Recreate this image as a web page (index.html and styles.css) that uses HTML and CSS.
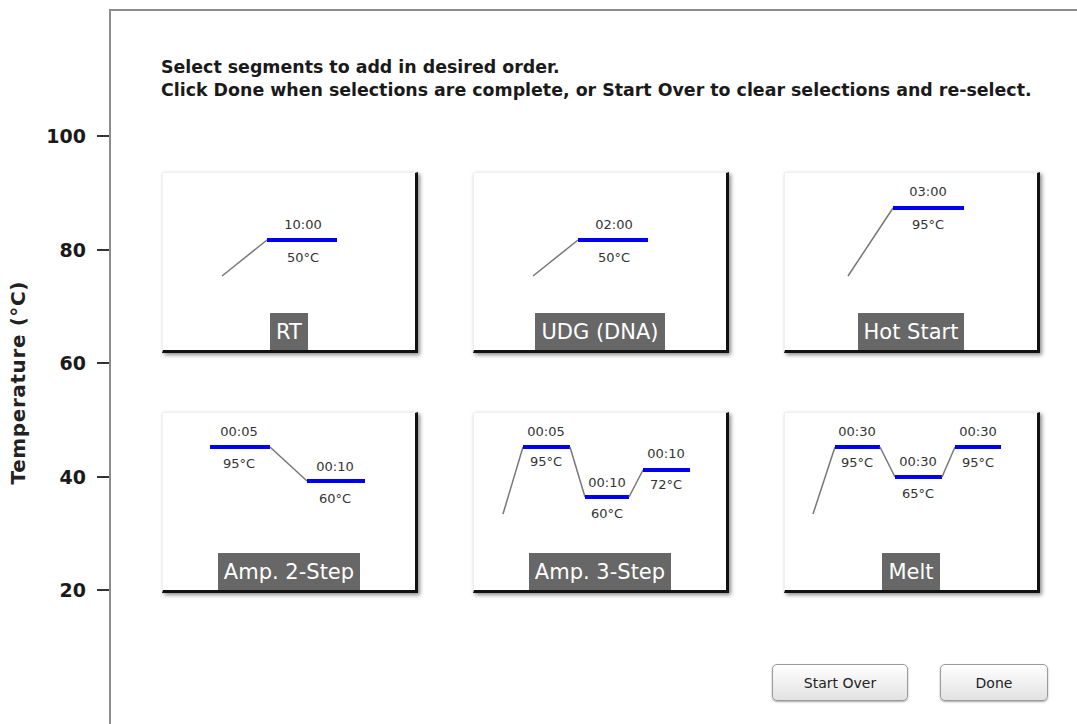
FILE: index.html
```html
<!DOCTYPE html>
<html lang="en">
  <head>
    <meta charset="utf-8" />
    <meta name="viewport" content="width=device-width, initial-scale=1" />
    <title>Add Segments</title>
    <link rel="stylesheet" href="styles.css">
  </head>
  <body>
    <div class="page">
      <!-- temperature axis, ticks every 20 degrees -->
      <div class="axis">
        <div class="axis-title"><span>Temperature (°C)</span></div>
        <ul class="ticks">
          <li>100</li>
          <li>80</li>
          <li>60</li>
          <li>40</li>
          <li>20</li>
        </ul>
      </div>

      <div class="panel">
        <p class="prompt">
          Select segments to add in desired order.<br />
          Click Done when selections are complete, or Start Over to clear selections and re-select.
        </p>

        <div class="segments">
          <div class="segment">
            <svg class="trace" viewBox="0 0 252 140">
              <line class="ramp" x1="59" y1="103" x2="104" y2="67" />
              <line class="hold" x1="104" y1="67" x2="174" y2="67" />
              <text x="140" y="51">10:00</text>
              <text x="140" y="84">50°C</text>
            </svg>
            <div class="segment-name">RT</div>
          </div>

          <div class="segment">
            <svg class="trace" viewBox="0 0 252 140">
              <line class="ramp" x1="59" y1="103" x2="104" y2="67" />
              <line class="hold" x1="104" y1="67" x2="174" y2="67" />
              <text x="140" y="51">02:00</text>
              <text x="140" y="84">50°C</text>
            </svg>
            <div class="segment-name">UDG (DNA)</div>
          </div>

          <div class="segment">
            <svg class="trace" viewBox="0 0 252 140">
              <line class="ramp" x1="63" y1="103" x2="108" y2="35" />
              <line class="hold" x1="108" y1="35" x2="179" y2="35" />
              <text x="143" y="18">03:00</text>
              <text x="143" y="51">95°C</text>
            </svg>
            <div class="segment-name">Hot Start</div>
          </div>

          <div class="segment">
            <svg class="trace" viewBox="0 0 252 140">
              <line class="hold" x1="47" y1="34" x2="107" y2="34" />
              <line class="ramp" x1="107" y1="34" x2="144" y2="68" />
              <line class="hold" x1="144" y1="68" x2="202" y2="68" />
              <text x="76" y="18">00:05</text>
              <text x="76" y="50">95°C</text>
              <text x="172" y="53">00:10</text>
              <text x="172" y="85">60°C</text>
            </svg>
            <div class="segment-name">Amp. 2-Step</div>
          </div>

          <div class="segment">
            <svg class="trace" viewBox="0 0 252 140">
              <line class="ramp" x1="29" y1="101" x2="49" y2="34" />
              <line class="hold" x1="49" y1="34" x2="96" y2="34" />
              <line class="ramp" x1="96" y1="34" x2="111" y2="84" />
              <line class="hold" x1="111" y1="84" x2="155" y2="84" />
              <line class="ramp" x1="155" y1="84" x2="169" y2="57" />
              <line class="hold" x1="169" y1="57" x2="216" y2="57" />
              <text x="72" y="18">00:05</text>
              <text x="72" y="48">95°C</text>
              <text x="133" y="69">00:10</text>
              <text x="133" y="100">60°C</text>
              <text x="192" y="40">00:10</text>
              <text x="192" y="71">72°C</text>
            </svg>
            <div class="segment-name">Amp. 3-Step</div>
          </div>

          <div class="segment">
            <svg class="trace" viewBox="0 0 252 140">
              <line class="ramp" x1="28" y1="101" x2="50" y2="34" />
              <line class="hold" x1="50" y1="34" x2="95" y2="34" />
              <line class="ramp" x1="95" y1="34" x2="110" y2="64" />
              <line class="hold" x1="110" y1="64" x2="157" y2="64" />
              <line class="ramp" x1="157" y1="64" x2="170" y2="34" />
              <line class="hold" x1="170" y1="34" x2="216" y2="34" />
              <text x="72" y="18">00:30</text>
              <text x="72" y="49">95°C</text>
              <text x="133" y="48">00:30</text>
              <text x="133" y="80">65°C</text>
              <text x="193" y="18">00:30</text>
              <text x="193" y="49">95°C</text>
            </svg>
            <div class="segment-name">Melt</div>
          </div>
        </div>

        <div class="actions">
          <button type="button" class="start-btn">Start Over</button>
          <button type="button" class="done-btn">Done</button>
        </div>
      </div>
    </div>
  </body>
</html>
```

FILE: styles.css
```css
* {
  box-sizing: border-box;
}

body {
  margin: 0;
  background: #fff;
  color: #222;
  font-family: "DejaVu Sans", sans-serif;
}

.page {
  display: flex;
  height: 724px;
  overflow: hidden;
}

/* y axis: title on the left, tick labels next to the panel edge */
.axis {
  width: 109px;
  flex-shrink: 0;
  display: flex;
}

.axis-title {
  width: 36px;
  display: flex;
  align-items: center;
  justify-content: center;
  padding-top: 42px;
}

.axis-title span {
  writing-mode: vertical-rl;
  transform: rotate(180deg);
  font-size: 20px;
  font-weight: bold;
  letter-spacing: 0.6px;
  white-space: nowrap;
}

.ticks {
  flex: 1;
  list-style: none;
  margin: 0;
  padding: 126px 0 0;
  display: flex;
  flex-direction: column;
  gap: 93.5px;
}

.ticks li {
  height: 20px;
  display: flex;
  align-items: center;
  justify-content: flex-end;
  gap: 11px;
  font-size: 19px;
  font-weight: bold;
  color: #1a1a1a;
}

.ticks li::after {
  content: "";
  width: 12px;
  height: 2px;
  background: #333;
}

.panel {
  flex: 1;
  margin-top: 9px;
  border-top: 2px solid #8c8c8c;
  border-left: 2px solid #8c8c8c;
  padding: 0 29px 0 50px;
}

.prompt {
  margin: 45px 0 0;
  font-size: 17.4px;
  font-weight: bold;
  line-height: 23px;
  color: #1a1a1a;
  white-space: nowrap;
}

.segments {
  display: grid;
  grid-template-columns: repeat(3, 256px);
  grid-auto-rows: 181px;
  column-gap: 55px;
  row-gap: 59px;
  margin: 70px 0 0 1px;
}

.segment {
  display: flex;
  flex-direction: column;
  align-items: center;
  border: 1px solid #f0f0f0;
  border-right: 3px solid #111;
  border-bottom: 3px solid #111;
  box-shadow: 2px 2px 4px rgba(0, 0, 0, 0.45);
}

.trace {
  width: 252px;
  height: 140px;
  display: block;
}

.trace .ramp {
  stroke: #777;
  stroke-width: 1.5;
}

.trace .hold {
  stroke: #0000f0;
  stroke-width: 4;
}

.trace text {
  font-family: "DejaVu Sans", sans-serif;
  font-size: 13px;
  fill: #333;
  text-anchor: middle;
  dominant-baseline: central;
}

.segment-name {
  margin-top: auto;
  height: 37px;
  line-height: 39px;
  padding: 0 6px;
  background: #676767;
  color: #fff;
  font-size: 21px;
}

.actions {
  display: flex;
  justify-content: flex-end;
  gap: 32px;
  margin-top: 71px;
}

.actions button {
  height: 37px;
  font-family: "DejaVu Sans", sans-serif;
  font-size: 14px;
  color: #222;
  border: 1px solid #9a9a9a;
  border-radius: 5px;
  background: linear-gradient(#fff, #e2e2e2);
  box-shadow: 0 1px 2px rgba(0, 0, 0, 0.35);
  cursor: pointer;
}

.start-btn {
  width: 136px;
}

.done-btn {
  width: 108px;
}
```
